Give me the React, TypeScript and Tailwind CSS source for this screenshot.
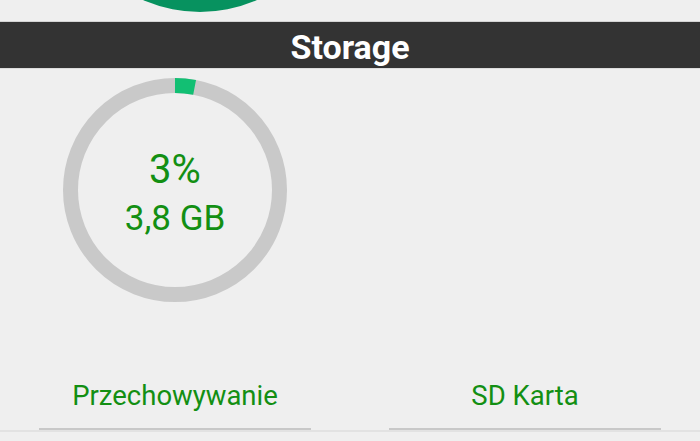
import React from 'react';

const font = { fontFamily: 'Roboto, "Noto Sans", sans-serif' };

function UsageRing({ percent, label }: { percent: number; label: string }) {
  const r = 104.5;
  const c = 2 * Math.PI * r;
  const arc = (percent / 100) * c;

  return (
    <div className="relative w-[224px] h-[224px]">
      <svg width="224" height="224" viewBox="0 0 224 224" className="absolute inset-0">
        <circle cx="112" cy="112" r={r} fill="none" stroke="#c9c9c9" strokeWidth="15" />
        <circle
          cx="112"
          cy="112"
          r={r}
          fill="none"
          stroke="#12bf73"
          strokeWidth="15"
          strokeDasharray={`${arc} ${c}`}
          transform="rotate(-90 112 112)"
        />
      </svg>
      <div className="absolute inset-0 flex flex-col items-center justify-center text-[#138f13]">
        <div className="text-[40px] leading-[44px] mt-[6px]">{percent}%</div>
        <div className="text-[35px] leading-[40px] mt-[7px]">{label}</div>
      </div>
    </div>
  );
}

function Tab({ title }: { title: string }) {
  return (
    <div className="flex flex-col items-center">
      <div className="text-[27.5px] leading-[32px] text-[#138f13] h-[32px] mb-[16px]">{title}</div>
      <div className="w-[272px] h-[2px] bg-[#c8c8c8]" />
    </div>
  );
}

export default function App() {
  return (
    <div className="w-[700px] h-[441px] overflow-hidden bg-[#efefef]" style={font}>
      {/* tail of the section above */}
      <div className="h-[21px] overflow-hidden pl-[59px]">
        <div className="w-[282px] h-[282px] rounded-full bg-[#07925f] mt-[-270px]" />
      </div>

      <div className="h-[1px] bg-[#d4d4d4]" />
      <div className="h-[46px] bg-[#333333] flex items-center justify-center">
        <span className="text-white font-bold text-[34px] leading-none mt-[3px]">Storage</span>
      </div>
      <div className="h-[1px] bg-[#dcdcdc]" />

      <div className="h-[290px] pt-[9px] pl-[63px]">
        <UsageRing percent={3} label="3,8 GB" />
      </div>

      <div className="grid grid-cols-2 pt-[21px]">
        <Tab title="Przechowywanie" />
        <Tab title="SD Karta" />
      </div>
      <div className="h-[2px] bg-[#e2e2e2]" />
    </div>
  );
}
